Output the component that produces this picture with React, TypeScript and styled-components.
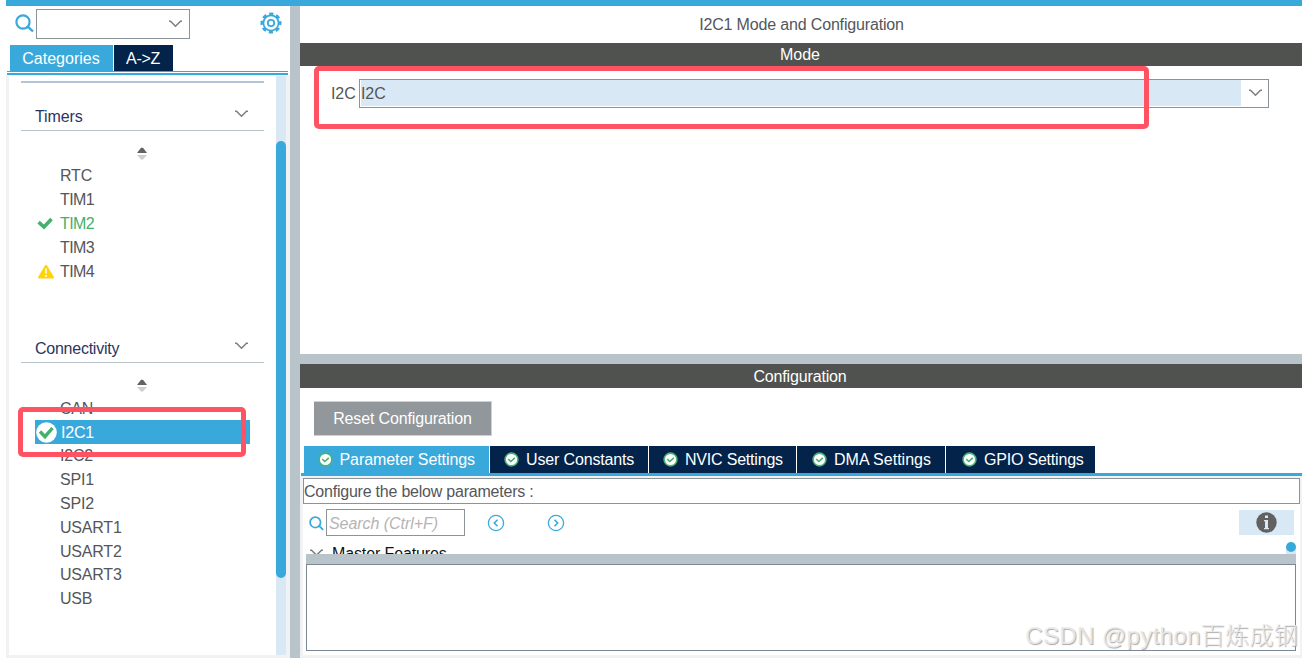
import React, { useState } from 'react';
import styled, { createGlobalStyle, css } from 'styled-components';

const GlobalStyle = createGlobalStyle`
  *,
  *::before {
    box-sizing: border-box;
  }

  body {
    margin: 0;
    background: #fff;
    overflow: hidden;
  }
`;

const blue = '#39a9dc';
const navy = '#03234b';
const steel = '#b8c4ca';
const dark = '#50524f';
const pale = '#d9e8f5';
const frame = '#f0f2f4';
const line = '#8c9399';

const Page = styled.div`
  position: relative;
  width: 1302px;
  height: 658px;
  overflow: hidden;
  display: flex;
  flex-direction: column;
  padding-left: 6px;
  color: #54565a;
  font-family: 'Liberation Sans', Arial, sans-serif;
  font-size: 16px;
  line-height: 20px;
  white-space: nowrap;
`;

const TopStrip = styled.div`
  height: 6px;
  background: ${blue};
`;

const Columns = styled.div`
  display: flex;
  height: 652px;
`;

const Text = styled.span<{ $ls?: number }>`
  letter-spacing: ${({ $ls = 0 }) => $ls}px;
`;

const Sidebar = styled.aside`
  display: flex;
  flex-direction: column;
  width: 284px;
`;

const Divider = styled.div`
  width: 10px;
  background: ${steel};
`;

const SideTools = styled.div`
  display: flex;
  align-items: center;
  height: 39px;
  padding: 0 0 3px 9px;
`;

const ToolIcon = styled.span`
  display: flex;
  padding-bottom: 2px;
`;

const SideSearch = styled.div`
  display: flex;
  align-items: center;
  justify-content: flex-end;
  width: 154px;
  height: 30px;
  margin-left: 2px;
  margin-right: 70px;
  padding-right: 7px;
  border: 1px solid ${line};
`;

const SideTabs = styled.div`
  display: flex;
  gap: 1px;
  height: 26px;
  padding-left: 4px;
`;

const SideTab = styled.button<{ $active: boolean; $width: number }>`
  width: ${({ $width }) => $width}px;
  padding: 1px 1px 0 0;
  border: 0;
  background: ${({ $active }) => ($active ? blue : navy)};
  color: #fff;
  font: inherit;
`;

const TabRule = styled.div`
  height: 4px;
  margin: 0 2px 0 1px;
  border-top: 1px solid ${blue};
  border-bottom: 2px solid ${blue};
`;

const TreePanel = styled.div`
  display: flex;
  flex: 1;
  border: solid ${frame};
  border-width: 1px 4px 3px 3px;
`;

const Tree = styled.div`
  width: 267px;
  padding: 5px 12px 0;
`;

const Track = styled.div`
  width: 10px;
  padding-top: 65px;
  background: ${pale};
`;

const Thumb = styled.div`
  height: 437px;
  border-radius: 5px;
  background: ${blue};
`;

const TreeTopLine = styled.div`
  height: 2px;
  background: #b4c3da;
`;

const Group = styled.section<{ $last?: boolean }>`
  height: ${({ $last }) => ($last ? 'auto' : '232.4px')};
`;

const GroupHead = styled.div`
  display: flex;
  align-items: flex-start;
  justify-content: space-between;
  height: 48px;
  padding: 24px 16px 0 14px;
  border-bottom: 1px solid ${steel};
  color: #2b3561;
`;

const HeadChevron = styled.span`
  display: flex;
  padding-top: 3px;
`;

const SortLine = styled.div`
  display: flex;
  justify-content: center;
  height: 33px;
  padding: 16px 1px 0 0;
`;

const Item = styled.div<{ $tone?: 'green' | 'selected' }>`
  display: flex;
  align-items: center;
  height: 23.8px;
  width: 215px;
  margin-left: 14px;
  padding-top: 1px;
  ${({ $tone }) =>
    $tone === 'green' &&
    css`
      color: #45b06c;
    `}
  ${({ $tone }) =>
    $tone === 'selected' &&
    css`
      background: ${blue};
      color: #fff;
    `}
`;

const ItemIcon = styled.span<{ $wide: boolean }>`
  display: flex;
  width: ${({ $wide }) => ($wide ? 26 : 25)}px;
`;

const Main = styled.main`
  display: flex;
  flex-direction: column;
  width: 1002px;
`;

const Title = styled.div`
  height: 37px;
  padding: 9px 0 0 1px;
  text-align: center;
`;

const Bar = styled.div<{ $height: number }>`
  height: ${({ $height }) => $height}px;
  padding: ${({ $height }) => $height - 21}px 2px 0 0;
  background: ${dark};
  color: #fff;
  text-align: center;
`;

const ModePanel = styled.div`
  display: flex;
  height: 288px;
  padding: 13px 33px 0 31px;
`;

const FieldLabel = styled.label`
  width: 28px;
  padding-top: 5px;
`;

const ModeSelect = styled.div`
  display: flex;
  align-items: center;
  flex: 1;
  height: 29px;
  padding: 0 6px 1px 1px;
  border: 1px solid ${line};
`;

const ModeValue = styled.div`
  flex: 1;
  height: 26px;
  margin-right: 8px;
  padding-top: 4px;
  background: ${pale};
`;

const Splitter = styled.div`
  height: 10px;
  background: ${steel};
`;

const ResetRow = styled.div`
  height: 58px;
  padding: 13px 0 0 14px;
`;

const ResetButton = styled.button`
  width: 178px;
  height: 35px;
  padding: 1px 0 0;
  border: solid #ccd1d4;
  border-width: 1px 1px 1px 0;
  background: #91979b;
  color: #fff;
  font: inherit;
`;

const ConfigTabs = styled.div`
  display: flex;
  gap: 1px;
  height: 27px;
  padding-left: 4px;
`;

const ConfigTab = styled.button<{
  $active: boolean;
  $width: number;
  $pad: number;
}>`
  display: flex;
  align-items: center;
  gap: 7px;
  width: ${({ $width }) => $width}px;
  padding: 0 0 0 ${({ $pad }) => $pad}px;
  border: 0;
  background: ${({ $active }) => ($active ? blue : navy)};
  color: #fff;
  font: inherit;
`;

const ConfigRule = styled.div`
  height: 3px;
  margin-left: 1px;
  background: ${blue};
`;

const ConfigPanel = styled.div`
  display: flex;
  flex-direction: column;
  flex: 1;
  border: solid ${frame};
  border-width: 2px 2px 3px 3px;
`;

const Hint = styled.div`
  height: 26px;
  padding: 3px 0 0;
  border: 1px solid ${line};
`;

const FilterRow = styled.div`
  display: flex;
  align-items: center;
  height: 38px;
  padding: 0 6px 1px;
`;

const FilterIcon = styled.span`
  display: flex;
  padding-top: 2px;
`;

const FilterInput = styled.input`
  width: 139px;
  height: 27px;
  margin: 0 21.5px 0 2px;
  padding: 2px 2px 0;
  border: 1px solid ${line};
  border-radius: 0;
  outline: 0;
  font: italic 16px 'Liberation Sans', Arial, sans-serif;
  letter-spacing: -0.05px;

  &::placeholder {
    color: #b4b4b4;
    opacity: 1;
  }
`;

const ArrowGap = styled.div`
  width: 42px;
`;

const InfoButton = styled.div`
  display: flex;
  align-items: center;
  justify-content: center;
  width: 55px;
  height: 25px;
  margin-left: auto;
  background: ${pale};
`;

const FeatureRow = styled.div`
  display: flex;
  align-items: flex-start;
  height: 12px;
  padding: 0 4px 0 7px;
  overflow: hidden;
  color: #111;
`;

const FeatureName = styled.span`
  padding: 2px 0 0 9px;
`;

const FeatureChevron = styled.span`
  display: flex;
  padding-top: 7px;
`;

const MiniTrack = styled.div`
  width: 10px;
  height: 12px;
  margin-left: auto;
  background: linear-gradient(#fff 5px, ${pale} 5px);
`;

const MiniThumb = styled.div`
  width: 10px;
  height: 10px;
  border-radius: 5px;
  background: ${blue};
`;

const Details = styled.div`
  height: 97px;
  margin: 0 4px 0 3px;
  border: solid #7b8894;
  border-width: 0 1px 1px;

  &::before {
    content: '';
    display: block;
    height: 11px;
    margin: 0 -1px;
    background: ${steel};
    border-bottom: 1px solid #7b8894;
  }
`;

const Mark = styled.div<{ $x: number; $y: number; $w: number; $h: number }>`
  position: absolute;
  left: ${({ $x }) => $x}px;
  top: ${({ $y }) => $y}px;
  width: ${({ $w }) => $w}px;
  height: ${({ $h }) => $h}px;
  border: 5px solid #ff5263;
  border-radius: 5px;
`;

const Watermark = styled.div`
  position: absolute;
  right: 4px;
  bottom: 7px;
  color: rgba(236, 236, 236, 0.9);
  font: 24px/30px 'Liberation Sans', 'Noto Sans CJK SC', sans-serif;
  font-weight: 300;
  letter-spacing: 0.35px;
  text-shadow: 1px 1px 1px #aaa;
`;

const Chevron = () => (
  <svg width='13' height='8' viewBox='0 0 13 8'>
    <path
      d='M0 1.2h1.5l5 5 5-5H13'
      fill='none'
      stroke='#7d8083'
      strokeWidth='1.6'
    />
  </svg>
);

const Magnifier = ({ size }: { size: number }) => (
  <svg width={size} height={size} viewBox='0 0 19 19'>
    <circle cx='8' cy='8' r='6.6' fill='none' stroke={blue} strokeWidth='2.2' />
    <path d='M11.5 13.2h2l4.5 4.3' fill='none' stroke={blue} strokeWidth='2.4' />
  </svg>
);

const Gear = () => (
  <svg width='22' height='22' viewBox='0 0 22 22'>
    <g fill='none' stroke={blue}>
      <circle cx='11' cy='11' r='7.6' strokeWidth='1.7' />
      <circle
        cx='11'
        cy='11'
        r='9.2'
        strokeWidth='2.6'
        strokeDasharray='4.2 3.025'
        strokeDashoffset='2.1'
      />
      <circle cx='11' cy='11' r='3.2' strokeWidth='1.8' />
    </g>
  </svg>
);

const SortArrows = () => (
  <svg width='10' height='13' viewBox='0 0 10 13'>
    <path d='M0 6L4 .8h2L10 6z' fill='#636363' />
    <path d='M0 8h10l-4 4.5H4z' fill='#cfcfcf' />
  </svg>
);

const Check = () => (
  <svg width='19' height='14' viewBox='0 0 19 14'>
    <path
      d='M3.6 5.2L9 10l7.5-8'
      fill='none'
      stroke='#45b06c'
      strokeWidth='3.6'
    />
  </svg>
);

const Warning = () => (
  <svg width='19' height='16' viewBox='0 0 19 16'>
    <path
      d='M11 1.8L4 13.5h14z'
      fill='#ffd20a'
      stroke='#ffd20a'
      strokeWidth='2'
      strokeLinejoin='round'
    />
    <path d='M11 4.5v5M11 11v2' stroke='#fff' strokeWidth='1.6' />
  </svg>
);

const SelectedCheck = () => (
  <svg width='23' height='22' viewBox='0 0 23 22'>
    <circle cx='11.5' cy='10.5' r='10.3' fill='#fff' />
    <path
      d='M5 9.5l5 5.2L17.5 6'
      fill='none'
      stroke='#45b06c'
      strokeWidth='3.4'
    />
  </svg>
);

const TabCheck = () => (
  <svg width='15' height='15' viewBox='0 0 15 15'>
    <circle
      cx='7.5'
      cy='7.5'
      r='6.4'
      fill='#fff'
      stroke='#4bb274'
      strokeWidth='1.6'
    />
    <path
      d='M4.2 7l2.6 2.5 4-3.7'
      fill='none'
      stroke='#45b06c'
      strokeWidth='1.6'
    />
  </svg>
);

const RoundArrow = ({ next }: { next?: boolean }) => (
  <svg width='18' height='18' viewBox='0 0 18 18'>
    <g fill='none' stroke={blue}>
      <circle cx='9' cy='9' r='7.6' strokeWidth='1.3' />
      <path
        d={next ? 'M7.5 5.8L10.7 9l-3.2 3.2' : 'M10.5 5.8L7.3 9l3.2 3.2'}
        strokeWidth='1.6'
      />
    </g>
  </svg>
);

const Info = () => (
  <svg width='21' height='21' viewBox='0 0 21 21'>
    <circle cx='10.5' cy='10.5' r='10.2' fill='#616161' />
    <path d='M9 3.5h3V6H9zM8 8h4v8h1v1.3H8V16h1V9.3H8z' fill={pale} />
  </svg>
);

const timers = ['RTC', 'TIM1', 'TIM2', 'TIM3', 'TIM4'];
const connectivity = [
  'CAN',
  'I2C1',
  'I2C2',
  'SPI1',
  'SPI2',
  'USART1',
  'USART2',
  'USART3',
  'USB',
];

const configTabs = [
  { label: 'Parameter Settings', width: 185, pad: 13.5, spacing: -0.08 },
  { label: 'User Constants', width: 158, pad: 14, spacing: -0.15 },
  { label: 'NVIC Settings', width: 147, pad: 14, spacing: -0.2 },
  { label: 'DMA Settings', width: 148, pad: 15, spacing: 0 },
  { label: 'GPIO Settings', width: 149, pad: 16, spacing: -0.2 },
];

const itemIcons: Record<string, React.ReactNode> = {
  TIM2: <Check />,
  TIM4: <Warning />,
  I2C1: <SelectedCheck />,
};

const TreeItem = ({ name }: { name: string }) => {
  const tone =
    name === 'TIM2' ? 'green' : name === 'I2C1' ? 'selected' : undefined;
  return (
    <Item $tone={tone}>
      <ItemIcon $wide={tone === 'selected'}>{itemIcons[name]}</ItemIcon>
      <Text $ls={name.startsWith('TIM') ? -0.6 : -0.2}>{name}</Text>
    </Item>
  );
};

const App = () => {
  const [sideTab, setSideTab] = useState('Categories');
  const [configTab, setConfigTab] = useState('Parameter Settings');

  return (
    <Page>
      <GlobalStyle />
      <TopStrip />
      <Columns>
        <Sidebar>
          <SideTools>
            <ToolIcon>
              <Magnifier size={19} />
            </ToolIcon>
            <SideSearch>
              <Chevron />
            </SideSearch>
            <ToolIcon>
              <Gear />
            </ToolIcon>
          </SideTools>
          <SideTabs>
            <SideTab
              $active={sideTab === 'Categories'}
              $width={103}
              onClick={() => setSideTab('Categories')}
            >
              <Text $ls={0}>Categories</Text>
            </SideTab>
            <SideTab
              $active={sideTab === 'A-Z'}
              $width={59}
              onClick={() => setSideTab('A-Z')}
            >
              <Text $ls={-0.3}>{'A->Z'}</Text>
            </SideTab>
          </SideTabs>
          <TabRule />
          <TreePanel>
            <Tree>
              <TreeTopLine />
              <Group>
                <GroupHead>
                  <Text $ls={-0.1}>Timers</Text>
                  <HeadChevron>
                    <Chevron />
                  </HeadChevron>
                </GroupHead>
                <SortLine>
                  <SortArrows />
                </SortLine>
                {timers.map((name) => (
                  <TreeItem key={name} name={name} />
                ))}
              </Group>
              <Group $last>
                <GroupHead>
                  <Text $ls={-0.25}>Connectivity</Text>
                  <HeadChevron>
                    <Chevron />
                  </HeadChevron>
                </GroupHead>
                <SortLine>
                  <SortArrows />
                </SortLine>
                {connectivity.map((name) => (
                  <TreeItem key={name} name={name} />
                ))}
              </Group>
            </Tree>
            <Track>
              <Thumb />
            </Track>
          </TreePanel>
        </Sidebar>
        <Divider />
        <Main>
          <Title>
            <Text $ls={-0.16}>I2C1 Mode and Configuration</Text>
          </Title>
          <Bar $height={23}>
            <Text>Mode</Text>
          </Bar>
          <ModePanel>
            <FieldLabel>
              <Text $ls={-0.1}>I2C</Text>
            </FieldLabel>
            <ModeSelect>
              <ModeValue>
                <Text $ls={-0.1}>I2C</Text>
              </ModeValue>
              <Chevron />
            </ModeSelect>
          </ModePanel>
          <Splitter />
          <Bar $height={24}>
            <Text $ls={-0.15}>Configuration</Text>
          </Bar>
          <ResetRow>
            <ResetButton>
              <Text $ls={-0.15}>Reset Configuration</Text>
            </ResetButton>
          </ResetRow>
          <ConfigTabs>
            {configTabs.map(({ label, width, pad, spacing }) => (
              <ConfigTab
                key={label}
                $active={configTab === label}
                $width={width}
                $pad={pad}
                onClick={() => setConfigTab(label)}
              >
                <TabCheck />
                <Text $ls={spacing}>{label}</Text>
              </ConfigTab>
            ))}
          </ConfigTabs>
          <ConfigRule />
          <ConfigPanel>
            <Hint>
              <Text $ls={-0.22}>Configure the below parameters :</Text>
            </Hint>
            <FilterRow>
              <FilterIcon>
                <Magnifier size={15} />
              </FilterIcon>
              <FilterInput placeholder='Search (Ctrl+F)' />
              <RoundArrow />
              <ArrowGap />
              <RoundArrow next />
              <InfoButton>
                <Info />
              </InfoButton>
            </FilterRow>
            <FeatureRow>
              <FeatureChevron>
                <Chevron />
              </FeatureChevron>
              <FeatureName>
                <Text $ls={-0.12}>Master Features</Text>
              </FeatureName>
              <MiniTrack>
                <MiniThumb />
              </MiniTrack>
            </FeatureRow>
            <Details />
          </ConfigPanel>
        </Main>
      </Columns>
      <Mark $x={314} $y={66} $w={835} $h={63} />
      <Mark $x={18} $y={407} $w={228} $h={50} />
      <Watermark>CSDN @python百炼成钢</Watermark>
    </Page>
  );
};

export default App;
